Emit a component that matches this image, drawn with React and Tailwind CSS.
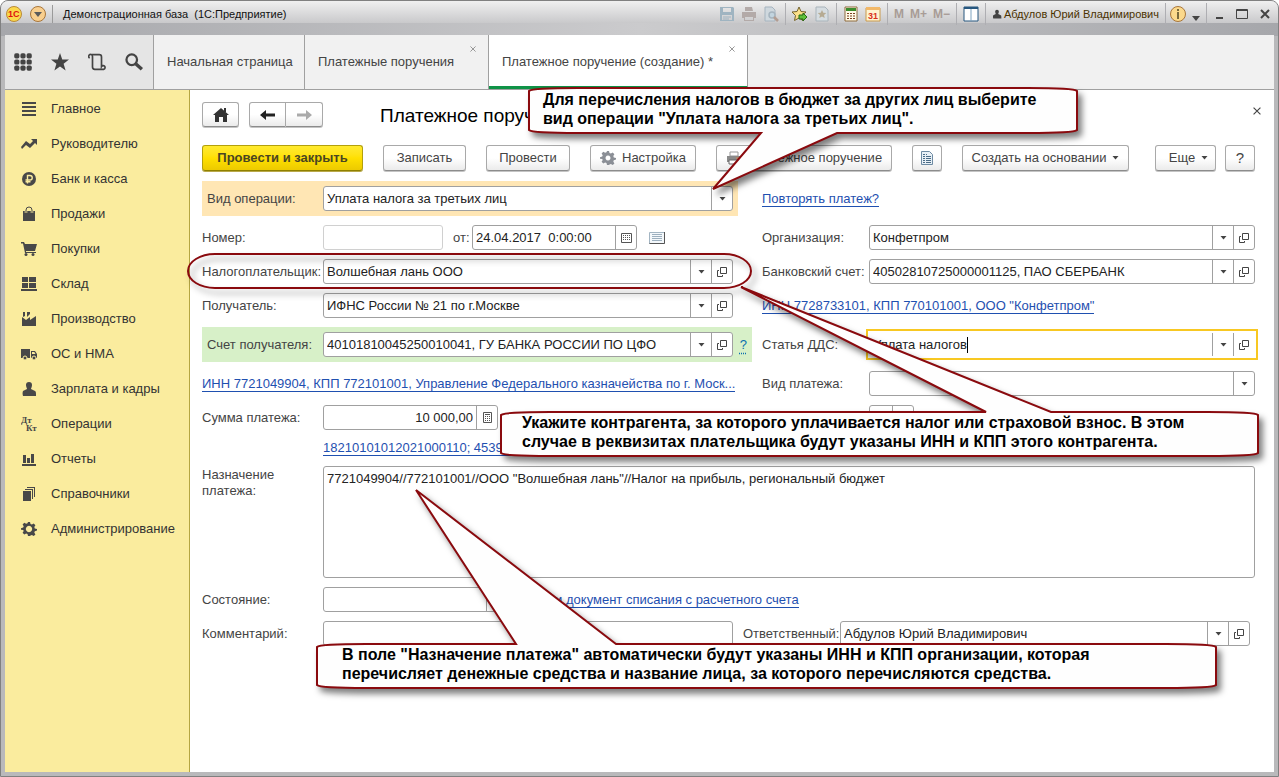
import React from 'react';

const Svg = ({ size = 16, children, className = '' }) => (
    <svg width={size} height={size} viewBox="0 0 16 16" fill="currentColor" className={`shrink-0 ${className}`} aria-hidden="true">
        {children}
    </svg>
);

const GEAR = 'M8 1l1 0 .5 2 1.4.6 1.8-1.1 1.7 1.7-1.1 1.8.5 1.4 2.2.6v1.6l-2.2.6-.5 1.4 1.1 1.8-1.7 1.7-1.8-1.1-1.4.6L9 15H7l-.5-2-1.4-.6-1.8 1.1-1.7-1.7 1.1-1.8L2.2 8.9 0 8.8V7.2l2.2-.6.5-1.4-1.1-1.8 1.7-1.7 1.8 1.1 1.4-.6L7 1z';

const menu = [
    { label: 'Главное', icon: <path d="M1 1h14v2H1zM1 5h14v2H1zM1 9h14v2H1zM1 13h14v2H1z" /> },
    { label: 'Руководителю', icon: <path d="M0 11l5-6 4 3 3-3-2-2h6v6l-2-2-5 5-4-3-4 4z" /> },
    {
        label: 'Банк и касса',
        icon: (
            <>
                <circle cx="8" cy="8" r="7" />
                <path d="M6.500 12.500V4.500h2.500a2.200 2.200 0 0 1 0 4.500H4.500M4.500 10.800h5" fill="none" stroke="#faec9e" strokeWidth="1.400" />
            </>
        ),
    },
    {
        label: 'Продажи',
        icon: (
            <>
                <path d="M2 5h12v10H2z" />
                <path d="M5 7V4a3 3 0 0 1 6 0v3" fill="none" stroke="#faec9e" strokeWidth="2.500" />
                <path d="M5 7V4a3 3 0 0 1 6 0v3" fill="none" stroke="currentColor" strokeWidth="1" />
            </>
        ),
    },
    {
        label: 'Покупки',
        icon: (
            <>
                <path d="M0 1h3l1 2h12l-2 7H5v1h10v1H4L2 2.500H0z" />
                <circle cx="5" cy="13.500" r="1.500" />
                <circle cx="12" cy="13.500" r="1.500" />
            </>
        ),
    },
    { label: 'Склад', icon: <path d="M1 1h6v5H1zM8 1h7v5H8zM1 7h6v5H1zM8 7h7v5H8zM0 13h16v2H0z" /> },
    { label: 'Производство', icon: <path d="M1 15V6l4 3 4-3v3l6-4v10zM2 1h2v4l-2 1zM6 1h3v2L6 6z" /> },
    {
        label: 'ОС и НМА',
        icon: (
            <>
                <path d="M0 3h9v9H0zM10 5h4l2 3v4h-6zM11 6v2h3.500L13.300 6z" fillRule="evenodd" />
                <circle cx="4" cy="12" r="2" stroke="#faec9e" />
                <circle cx="13" cy="12" r="2" stroke="#faec9e" />
            </>
        ),
    },
    { label: 'Зарплата и кадры', icon: <path d="M5 4a3 3 0 0 1 6 0c0 2-1 3-1 4l4 2c1 .500 1 2 1 5H2c-1-3 0-4.500 0-5l4-2c0-1-1-2-1-4z" /> },
    {
        label: 'Операции',
        icon: (
            <g fontFamily="Liberation Serif, serif" fontWeight="bold" fontSize="9">
                <text x="0" y="7">Дт</text>
                <text x="5" y="15">Кт</text>
            </g>
        ),
    },
    { label: 'Отчеты', icon: <path d="M1 13h14v2H1zM2 4h3v8H2zM6 7h3v5H6zM10 3h3v9h-3z" /> },
    { label: 'Справочники', icon: <path d="M2 5h8v10H2zM4 3h8v10h-1V4H4zM6 1h8v10h-1V2H6z" /> },
    { label: 'Администрирование', icon: <path d={`${GEAR}M8 4.800a3.200 3.200 0 1 0 .010 0z`} fillRule="evenodd" /> },
];

const Caret = () => (
    <svg width="7" height="4" viewBox="0 0 7 4" fill="#444" className="shrink-0" aria-hidden="true">
        <path d="M.5 0h6l-3 3.500z" />
    </svg>
);

const OpenIcon = () => (
    <svg width="10" height="10" viewBox="0 0 10 10" fill="none" stroke="#444" className="shrink-0" aria-hidden="true">
        <path d="M3.500.5h6v6h-6zM2 3.500H.5v6h5V8" />
    </svg>
);

const CalendarIcon = () => (
    <svg width="11" height="10" viewBox="0 0 11 10" fill="none" stroke="#555" className="shrink-0" aria-hidden="true">
        <path d="M.5.5h10v9H.5z" />
        <path d="M2 2.500h7M2 4.500h7M2 6.500h7" strokeDasharray="1 1" />
    </svg>
);

const CalcIcon = () => (
    <svg width="9" height="11" viewBox="0 0 9 11" fill="none" stroke="#555" className="shrink-0" aria-hidden="true">
        <path d="M.5.5h8v10h-8zM2 2.500h5" />
        <path d="M2 4.500h5M2 6.500h5M2 8.500h5" strokeDasharray="1 1" />
    </svg>
);

const cellIcons = { caret: <Caret />, open: <OpenIcon />, calendar: <CalendarIcon />, calc: <CalcIcon /> };
const cellNames = { caret: 'Выбрать', open: 'Открыть', calendar: 'Календарь', calc: 'Калькулятор' };

const Field = ({ id, value = '', cells = [], className = 'flex-1', border = 'border-[#a0a0a0]', align = '' }) => (
    <div className={`flex h-[25px] min-w-0 rounded-[3px] border bg-white ${border} ${className}`}>
        <input id={id} defaultValue={value} className={`min-w-0 flex-1 bg-transparent px-[3px] text-[#222] outline-none ${align}`} />
        {cells.map((cell) => (
            <button key={cell} type="button" aria-label={cellNames[cell]} className="flex w-[21px] shrink-0 items-center justify-center border-l border-[#a0a0a0]">
                {cellIcons[cell]}
            </button>
        ))}
    </div>
);

const SelectField = ({ id, value = '', className = 'flex-1' }) => (
    <div className={`grid h-[25px] min-w-0 rounded-[3px] border border-[#a0a0a0] bg-white ${className}`}>
        <select id={id} className="col-start-1 row-start-1 min-w-0 appearance-none bg-transparent px-[3px] text-[#222] outline-none">
            <option>{value}</option>
        </select>
        <span className="pointer-events-none col-start-1 row-start-1 flex w-[21px] items-center justify-center justify-self-end border-l border-[#a0a0a0]">
            <Caret />
        </span>
    </div>
);

const Label = ({ htmlFor, children, className = 'w-[121px]' }) => (
    <label htmlFor={htmlFor} className={`shrink-0 whitespace-nowrap ${className}`}>{children}</label>
);

const Link = ({ children, className = '' }) => (
    <a href="#" className={`block border-b border-[#1f50b0] leading-[15px] whitespace-nowrap text-[#1f50b0] ${className}`}>{children}</a>
);

const plainButton = 'border-[#a9a9a9] border-b-[#8c8c8c] bg-linear-to-b from-white from-50% to-[#ebebeb] text-[#444] shadow-[0_1px_0_#c4c4c4]';
const primaryButton = 'border-[#b3a00c] border-b-[#8f8000] bg-linear-to-b from-[#ffea2e] via-[#ffe000] to-[#ecca00] font-bold text-[#4a4522] shadow-[0_1px_0_#b9a94a]';

const Button = ({ children, look = plainButton, size = 'h-[26px]', className = '' }) => (
    <button type="button" className={`flex shrink-0 items-center justify-center gap-1.5 rounded-[3px] border whitespace-nowrap ${look} ${size} ${className}`}>
        {children}
    </button>
);

const Divider = () => <span className="h-[22px] w-px bg-[#aeaeb2]" />;

const TitleBar = () => (
    <header className="flex h-[35px] shrink-0 flex-col bg-linear-to-r from-[#a6a7ab] via-[#cbcbcd] to-[#a6a7ab]">
        <div className="flex h-[22px] items-center bg-linear-to-b from-[#f0f0f0] to-[#c9c9cb] pt-1 pr-2 pl-[5px] text-[#111]">
            <button type="button" aria-label="Меню системы">
                <Svg>
                    <circle cx="8" cy="8" r="7.500" fill="#fbd84a" stroke="#b98a3a" />
                    <text x="2" y="11" fontSize="9" fontWeight="bold" fill="#e01010" fontFamily="Liberation Sans, sans-serif">1С</text>
                </Svg>
            </button>
            <button type="button" aria-label="Главное меню" className="ml-2">
                <Svg>
                    <circle cx="8" cy="8" r="7.500" fill="#f9cf8e" stroke="#a8763a" />
                    <path d="M4 6h8l-4 5z" fill="#5b5b5b" />
                </Svg>
            </button>
            <span className="ml-1.5 h-[18px] w-px bg-[#9a9a9a]" />
            <span className="ml-2.5 text-[11px] whitespace-pre">Демонстрационная база  (1С:Предприятие)</span>

            <div className="ml-auto flex items-center gap-1.5">
                <Svg className="text-[#9fb4c1]">
                    <path d="M1 1h13l1 1v13H1zM4 2v4h8V2zM3 9v5h10V9z" fillRule="evenodd" />
                    <path d="M4 11h8M4 13h6" stroke="currentColor" />
                </Svg>
                <Svg className="text-[#b3aaa8]">
                    <path d="M4 1h7l1 4H4zM1 6h14v6h-2v3H3v-3H1zM4 11h8v3H4z" fillRule="evenodd" />
                </Svg>
                <Svg className="text-[#a6b4bf]">
                    <path d="M2 1h7l3 3v11H2z" fill="#cfd8de" stroke="currentColor" />
                    <circle cx="9" cy="9" r="3" fill="#c2d4df" stroke="currentColor" strokeWidth="1.500" />
                    <path d="M11 11l4 4" stroke="#b39d92" strokeWidth="2.500" />
                </Svg>
                <Divider />
                <Svg>
                    <path d="M7 1l2 4.500 5 .500-4 3.500 1 5L7 12l-4.500 2.500 1-5L0 6l5-.500z" fill="#fbe08a" stroke="#73622c" />
                    <path d="M7 9h4V7l4 4-4 4v-2H7z" fill="#5fc03a" stroke="#246b14" />
                </Svg>
                <Svg>
                    <path d="M2 1h9l3 3v11H2z" fill="#d6dde1" stroke="#a9b4bb" />
                    <path d="M8 4l1.300 2.700 3 .300-2.300 2 .700 3L8 10.500 5.300 12 6 9 3.700 7l3-.300z" fill="#b6ab93" />
                </Svg>
                <Divider />
                <Svg>
                    <path d="M2 1h12v14H2z" fill="#fffbe8" stroke="#8e6a3c" />
                    <path d="M3 2h10v3H3z" fill="#3c8c2c" />
                    <path d="M4 7.500h8M4 10h8M4 12.500h8" stroke="#7a4020" strokeDasharray="2 1" />
                </Svg>
                <Svg>
                    <path d="M1 2h14v13H1z" fill="#fff3d0" stroke="#c99a4c" />
                    <path d="M1 1h14v3H1z" fill="#f2b868" />
                    <text x="3" y="13" fontSize="9" fontWeight="bold" fill="#d8301c" fontFamily="Liberation Sans, sans-serif">31</text>
                </Svg>
                <Divider />
                <span className="text-[12px] font-bold text-[#a89c96]">M</span>
                <span className="text-[12px] font-bold text-[#a89c96]">M+</span>
                <span className="text-[12px] font-bold text-[#a89c96]">M−</span>
                <Divider />
                <Svg>
                    <path d="M1 1h14v14H1z" fill="#fff" stroke="#27577f" />
                    <path d="M1 1h14v2H1z" fill="#27577f" />
                    <path d="M8 3v12" stroke="#7fa3bf" />
                </Svg>
                <Divider />
                <span className="flex items-center gap-0.5 text-[11px] whitespace-nowrap text-[#4a3200]">
                    <Svg size={10} className="text-[#444]">{menu[8].icon}</Svg>
                    Абдулов Юрий Владимирович
                </span>
                <Divider />
            </div>
            <button type="button" aria-label="О программе" className="ml-1 flex items-center gap-1.5">
                <Svg>
                    <circle cx="8" cy="8" r="7.500" fill="#fbd98c" stroke="#a8763a" />
                    <path d="M7 3h2v2H7zM7 6h2v7H7z" fill="#7a6a3c" />
                </Svg>
                <svg width="8" height="5" viewBox="0 0 8 5" fill="#444" className="mt-2" aria-hidden="true"><path d="M0 0h8L4 5z" /></svg>
            </button>
            <span className="ml-1.5 h-[22px] w-px bg-[#aeaeb2]" />
            <div className="ml-2 flex items-center gap-3">
                <button type="button" aria-label="Свернуть">
                    <svg width="9" height="12" viewBox="0 0 9 12" aria-hidden="true"><path d="M1 9h7v2H1z" fill="#444" /></svg>
                </button>
                <button type="button" aria-label="Развернуть">
                    <svg width="12" height="12" viewBox="0 0 12 12" fill="none" stroke="#444" aria-hidden="true"><path d="M.5 1.500h11v9H.5zM.5 2.500h11" /></svg>
                </button>
                <button type="button" aria-label="Закрыть окно">
                    <svg width="10" height="10" viewBox="0 0 10 10" stroke="#444" strokeWidth="2" aria-hidden="true"><path d="M1 1l8 8M9 1L1 9" /></svg>
                </button>
            </div>
        </div>
    </header>
);

const CloseMark = ({ size = 7, color = '#888' }) => (
    <svg width={size} height={size} viewBox="0 0 7 7" stroke={color} aria-hidden="true"><path d="M.5.5l6 6M6.500.5l-6 6" /></svg>
);

const Tab = ({ title, active, closable = true, className = '' }) => (
    <div className={`relative flex items-center border-r border-[#a0a0a0] pl-[13px] ${active ? 'border-b-[3px] border-b-[#0f9347] bg-white pt-[3px]' : ''} ${className}`}>
        <a href="#" className="whitespace-nowrap">{title}</a>
        {closable && (
            <button type="button" aria-label="Закрыть вкладку" className="absolute top-[11px] right-3">
                <CloseMark size={6} />
            </button>
        )}
    </div>
);

const TabBar = () => (
    <nav className="flex h-[55px] shrink-0 border-b border-[#a0a0a0] bg-[#f1f1f1] text-[#444]">
        <div className="flex w-[149px] shrink-0 items-center gap-[19px] border-r border-[#a0a0a0] bg-[#e5e5e5] pl-[9px]">
            <button type="button" aria-label="Все разделы">
                <Svg size={18}>
                    {[2.500, 8, 13.500].map((y) => [2.500, 8, 13.500].map((x) => <rect key={`${x}-${y}`} x={x - 2.300} y={y - 2.300} width="4.600" height="4.600" rx="1.500" />))}
                </Svg>
            </button>
            <button type="button" aria-label="Избранное">
                <Svg size={18}><path d="M8 0l2 5.800h6l-4.800 3.700 1.800 6L8 12l-5 3.500 1.800-6L0 5.800h6z" /></Svg>
            </button>
            <button type="button" aria-label="История">
                <Svg size={18}>
                    <path d="M1.500 4.500A1.700 1.700 0 1 1 4 3v9.500a2 2 0 0 0 2 2h8a1.700 1.700 0 1 0-2-2.500V3.500a2 2 0 0 0-2-2H2.500M13.500 14.500H6" fill="none" stroke="currentColor" strokeWidth="1.500" />
                </Svg>
            </button>
            <button type="button" aria-label="Поиск">
                <Svg size={18}>
                    <circle cx="6" cy="6" r="4.700" fill="none" stroke="currentColor" strokeWidth="2" />
                    <path d="M9.500 9.500l5.500 5" stroke="currentColor" strokeWidth="3" />
                </Svg>
            </button>
        </div>
        <Tab title="Начальная страница" closable={false} className="w-[151px]" />
        <Tab title="Платежные поручения" className="w-[184px]" />
        <Tab title="Платежное поручение (создание) *" active className="w-[259px]" />
    </nav>
);

const Sidebar = () => (
    <aside className="w-[185px] shrink-0 border-r border-[#b5a642] bg-[#faec9e] pt-px">
        <ul>
            {menu.map((item) => (
                <li key={item.label}>
                    <a href="#" className="flex h-[35px] items-center gap-[14px] pl-4 text-[#333]">
                        <Svg className="text-[#484848]">{item.icon}</Svg>
                        <span className="whitespace-nowrap">{item.label}</span>
                    </a>
                </li>
            ))}
        </ul>
    </aside>
);

const Toolbar = () => (
    <div className="mt-[18px] flex pr-[19px] pb-px">
        <Button look={primaryButton} className="w-[161px]">Провести и закрыть</Button>
        <Button className="ml-5 w-[83px]">Записать</Button>
        <Button className="ml-5 w-[84px]">Провести</Button>
        <Button className="ml-5 w-[106px]">
            <Svg className="text-[#8b8f96]">
                <path d={`${GEAR}M8 5.500a2.500 2.500 0 1 0 .010 0z`} fillRule="evenodd" />
            </Svg>
            Настройка
        </Button>
        <Button className="ml-5 w-[176px]">
            <Svg className="text-[#6f6f6f]">
                <path d="M4 2h8v4H4z" fill="#fff" stroke="#999" />
                <path d="M1 6h14v6H1z" fill="#8a8a8a" />
                <path d="M3 10h10v4H3z" fill="#fff" stroke="#666" />
                <path d="M10 8h3" stroke="#d98a4a" />
            </Svg>
            Платежное поручение
        </Button>
        <Button className="ml-5 w-[30px]">
            <Svg>
                <path d="M2.500 1.500h8l3 3v10h-11z" fill="#e8f0f6" stroke="#6e8ba3" />
                <path d="M4 4.500h4M4 6.500h8M4 8.500h8M4 10.500h8M4 12.500h8" stroke="#4b6c87" strokeDasharray="2 1 5 0" />
            </Svg>
        </Button>
        <Button className="ml-5 w-[167px]">
            Создать на основании
            <Caret />
        </Button>
        <Button className="ml-auto w-[61px] pl-1.5">
            Еще
            <Caret />
        </Button>
        <Button className="ml-[9px] w-[30px] text-[15px]">?</Button>
    </div>
);

const LeftColumn = () => (
    <div className="flex min-w-0 flex-col gap-[9px]">
        <div className="mr-[14px] flex h-[35px] items-center bg-[#ffe6b4] px-[5px]">
            <Label htmlFor="operation" className="w-[116px]">Вид операции:</Label>
            <SelectField id="operation" value="Уплата налога за третьих лиц" />
        </div>
        <div className="flex items-center">
            <Label htmlFor="number">Номер:</Label>
            <Field id="number" className="w-[120px]" border="border-[#d0d0d0]" />
            <Label htmlFor="date" className="w-[29px] pl-2.5">от:</Label>
            <Field id="date" value="24.04.2017  0:00:00" cells={['calendar']} className="w-[165px] whitespace-pre" />
            <svg width="16" height="12" viewBox="0 0 16 12" fill="none" className="ml-3" aria-hidden="true">
                <path d="M.5.5h15v11H.5z" fill="#f4f8fb" stroke="#a3b5c3" />
                <path d="M15.500 0v11.500H.5" stroke="#555" />
                <path d="M3 2.500h10M3 4.500h10M3 6.500h10M3 8.500h10" stroke="#9cafbe" />
            </svg>
        </div>
        <div className="flex items-center pr-[19px]">
            <Label htmlFor="payer">Налогоплательщик:</Label>
            <Field id="payer" value="Волшебная лань ООО" cells={['caret', 'open']} />
        </div>
        <div className="flex items-center pr-[19px]">
            <Label htmlFor="receiver">Получатель:</Label>
            <Field id="receiver" value="ИФНС России № 21 по г.Москве" cells={['caret', 'open']} />
        </div>
        <div className="flex h-[35px] items-center bg-[#d7f0c8] px-[5px]">
            <Label htmlFor="account" className="w-[116px]">Счет получателя:</Label>
            <Field id="account" value="40101810045250010041, ГУ БАНКА РОССИИ ПО ЦФО" cells={['caret', 'open']} />
            <a href="#" className="w-[14px] text-right text-[#0a6fae] underline decoration-dotted underline-offset-4">?</a>
        </div>
        <div className="flex h-[25px] items-center">
            <Link>ИНН 7721049904, КПП 772101001, Управление Федерального казначейства по г. Моск...</Link>
        </div>
        <div className="flex items-center">
            <Label htmlFor="sum">Сумма платежа:</Label>
            <Field id="sum" value="10 000,00" cells={['calc']} className="w-[175px]" align="text-right" />
        </div>
        <div className="flex h-[18px] items-center pl-[121px]">
            <Link>18210101012021000110; 45394000</Link>
        </div>
    </div>
);

const RightColumn = () => (
    <div className="flex min-w-0 flex-col gap-[9px]">
        <div className="flex h-[35px] items-center">
            <Link>Повторять платеж?</Link>
        </div>
        <div className="flex items-center">
            <Label htmlFor="company" className="w-[107px]">Организация:</Label>
            <Field id="company" value="Конфетпром" cells={['caret', 'open']} />
        </div>
        <div className="flex items-center">
            <Label htmlFor="bank" className="w-[107px]">Банковский счет:</Label>
            <Field id="bank" value="40502810725000001125, ПАО СБЕРБАНК" cells={['caret', 'open']} />
        </div>
        <div className="flex h-[25px] items-center">
            <Link>ИНН 7728733101, КПП 770101001, ООО "Конфетпром"</Link>
        </div>
        <div className="flex h-[35px] items-center">
            <Label htmlFor="article" className="w-[104px]">Статья ДДС:</Label>
            <div className="-mr-[3px] flex h-[31px] min-w-0 flex-1 items-center border-2 border-[#f8c822] bg-white py-px pr-0.5">
                <input id="article" defaultValue="Уплата налогов" className="field-sizing-content bg-transparent pl-[5px] text-[#222] outline-none" />
                <span className="mr-auto h-4 w-px bg-black" />
                <button type="button" aria-label="Выбрать" className="flex h-[23px] w-[21px] items-center justify-center border-l border-[#a0a0a0]"><Caret /></button>
                <button type="button" aria-label="Открыть" className="flex h-[23px] w-[21px] items-center justify-center border-l border-[#a0a0a0]"><OpenIcon /></button>
            </div>
        </div>
        <div className="flex items-center">
            <Label htmlFor="kind" className="w-[107px]">Вид платежа:</Label>
            <SelectField id="kind" />
        </div>
        <div className="flex items-center">
            <span className="w-[107px] shrink-0" />
            <SelectField id="order" className="w-[45px]" />
        </div>
    </div>
);

const Form = () => (
    <form className="mt-[9px] pr-[19px]">
        <div className="grid grid-cols-[minmax(0,550fr)_minmax(0,493fr)] gap-2.5">
            <LeftColumn />
            <RightColumn />
        </div>
        <div className="mt-[9px] flex">
            <label htmlFor="purpose" className="w-[121px] shrink-0 pt-px pr-8 leading-4">Назначение платежа:</label>
            <textarea
                id="purpose"
                defaultValue={'7721049904//772101001//ООО "Волшебная лань"//Налог на прибыль, региональный бюджет'}
                className="h-28 min-w-0 flex-1 resize-none rounded-[3px] border border-[#a0a0a0] bg-white px-[3px] py-1 leading-4 text-[#222] outline-none"
            />
        </div>
        <div className="mt-[9px] flex items-center">
            <Label htmlFor="state">Состояние:</Label>
            <SelectField id="state" className="w-[185px]" />
            <Link className="ml-3">Ввести документ списания с расчетного счета</Link>
        </div>
        <div className="mt-[9px] flex items-center pr-[5px]">
            <Label htmlFor="comment">Комментарий:</Label>
            <Field id="comment" />
            <Label htmlFor="owner" className="w-[107px] pl-2.5">Ответственный:</Label>
            <Field id="owner" value="Абдулов Юрий Владимирович" cells={['caret', 'open']} />
        </div>
    </form>
);

// Balloon outlines are drawn in their own box; pointers reach outside of it
const Callout = ({ d, className, children }) => (
    <div className={`pointer-events-none absolute z-20 flex items-center ${className}`}>
        <svg className="absolute inset-0 h-full w-full overflow-visible drop-shadow-[4px_5px_3px_rgba(0,0,0,0.5)]" fill="#fefefe" stroke="#8a0a0e" strokeWidth="2" aria-hidden="true">
            <path d={d} />
        </svg>
        <p className="relative pb-1 text-[16px] leading-[19px] font-bold whitespace-nowrap text-black">{children}</p>
    </div>
);

const Callouts = () => (
    <>
        <svg className="pointer-events-none absolute top-[252px] left-[187px] z-20 h-9 w-[565px] overflow-visible drop-shadow-[4px_5px_3px_rgba(0,0,0,0.4)]" fill="none" stroke="#8a0a0e" strokeWidth="2" aria-hidden="true">
            <rect x="0" y="1" width="563" height="34" rx="27" ry="17" />
        </svg>
        <Callout className="top-[87px] left-[527px] h-[45px] w-[550px] pl-[15px]" d="M1 3Q4 0 50 0H500Q546 0 549 3V42Q546 45 500 45H309L185 101 233 45H50Q4 45 1 42Z">
            Для перечисления налогов в бюджет за других лиц выберите
            <br />
            вид операции "Уплата налога за третьих лиц".
        </Callout>
        <Callout className="top-[411px] left-[499px] h-11 w-[758px] pl-[22px]" d="M1 3Q4 0 50 0H486L241 -125 551 0H708Q755 0 758 3V41Q755 44 708 44H50Q4 44 1 41Z">
            Укажите контрагента, за которого уплачивается налог или страховой взнос. В этом
            <br />
            случае в реквизитах плательщика будут указаны ИНН и КПП этого контрагента.
        </Callout>
        <Callout className="top-[643px] left-[315px] h-11 w-[900px] pl-[26px]" d="M1 3Q4 0 50 0H200L100 -154 300 0H850Q897 0 900 3V41Q897 44 850 44H50Q4 44 1 41Z">
            В поле "Назначение платежа" автоматически будут указаны ИНН и КПП организации, которая
            <br />
            перечисляет денежные средства и название лица, за которого перечисляются средства.
        </Callout>
    </>
);

export default function App() {
    return (
        <div className="relative flex min-h-screen flex-col overflow-hidden rounded-t-lg border border-[#808080] bg-[#b9b9bb] font-['Liberation_Sans',Arial,sans-serif] text-[13px] text-[#444]">
            <TitleBar />
            <div className="mx-1 mb-1 -mt-px flex flex-1 flex-col bg-white">
                <TabBar />
                <div className="flex flex-1">
                    <Sidebar />
                    <main className="min-w-0 flex-1 pt-3 pl-3">
                        <div className="flex h-[25px] items-center pr-[13px]">
                            <Button size="h-[25px]" className="w-[37px]">
                                <Svg className="text-[#333]"><path d="M8 1l8 7h-2v7h-4v-5H6v5H2V8H0zM11 1h2v4h-2z" /></Svg>
                            </Button>
                            <div className="ml-2.5 flex">
                                <Button size="h-[25px]" className="w-[37px] rounded-r-none">
                                    <Svg className="text-[#222]"><path d="M0 8l6-5v3.500h9v3H6V13z" /></Svg>
                                </Button>
                                <Button size="h-[25px]" className="w-[37px] rounded-l-none border-l-0">
                                    <Svg className="text-[#aaa]"><path d="M16 8l-6-5v3.500H1v3h9V13z" /></Svg>
                                </Button>
                            </div>
                            <h1 className="ml-[57px] pt-1 text-[19px] whitespace-nowrap text-black">Платежное поручение (создание) *</h1>
                            <button type="button" aria-label="Закрыть" className="mb-2 ml-auto"><CloseMark color="#444" size={8} /></button>
                        </div>
                        <Toolbar />
                        <Form />
                    </main>
                </div>
            </div>
            <Callouts />
        </div>
    );
}
